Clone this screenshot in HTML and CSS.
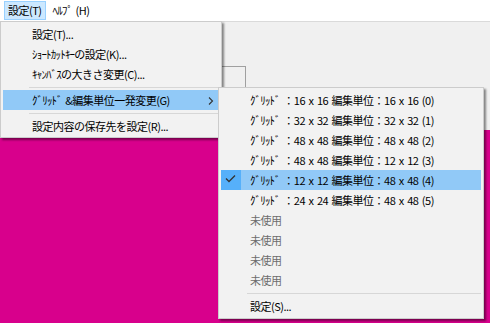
FILE: index.html
```html
<!DOCTYPE html>
<html lang="ja">
<head>
    <meta charset="UTF-8">
    <title>設定メニュー</title>
    <link rel="stylesheet" href="styles.css">
</head>
<body>
    <div class="menubar">
        <span class="bar-item active">設定(T)</span>
        <span class="bar-item"><span class="hw">ﾍﾙﾌﾟ</span> (H)</span>
    </div>
    <div class="workspace">
        <div class="toolbar"><div class="corner"></div></div>
        <div class="canvas"></div>
    </div>

    <div class="menu main-menu">
        <div class="item"><span class="label">設定(T)...</span></div>
        <div class="item"><span class="label"><span class="hw">ｼｮｰﾄｶｯﾄｷｰ</span>の設定(K)...</span></div>
        <div class="item"><span class="label"><span class="hw">ｷｬﾝﾊﾞｽ</span>の大きさ変更(C)...</span></div>
        <div class="sep"></div>
        <div class="item hover">
            <span class="label"><span class="hw">ｸﾞﾘｯﾄﾞ</span> &amp;編集単位一発変更(G)</span>
            <svg class="arrow" width="8" height="10" viewBox="0 0 8 10"><polyline points="2,1.5 5.5,5 2,8.5" fill="none" stroke="#333" stroke-width="1.1"/></svg>
        </div>
        <div class="sep"></div>
        <div class="item"><span class="label">設定内容の保存先を設定(R)...</span></div>
    </div>

    <div class="menu sub-menu">
        <div class="item"><span class="label"><span class="hw">ｸﾞﾘｯﾄﾞ</span> ：16 x 16 編集単位：16 x 16 (0)</span></div>
        <div class="item"><span class="label"><span class="hw">ｸﾞﾘｯﾄﾞ</span> ：32 x 32 編集単位：32 x 32 (1)</span></div>
        <div class="item"><span class="label"><span class="hw">ｸﾞﾘｯﾄﾞ</span> ：48 x 48 編集単位：48 x 48 (2)</span></div>
        <div class="item"><span class="label"><span class="hw">ｸﾞﾘｯﾄﾞ</span> ：48 x 48 編集単位：12 x 12 (3)</span></div>
        <div class="item hover checked">
            <span class="check"><svg width="20" height="20" viewBox="0 0 20 20"><polyline points="5,8.5 8,11.5 14,5.5" fill="none" stroke="#333" stroke-width="1.3"/></svg></span>
            <span class="label"><span class="hw">ｸﾞﾘｯﾄﾞ</span> ：12 x 12 編集単位：48 x 48 (4)</span>
        </div>
        <div class="item"><span class="label"><span class="hw">ｸﾞﾘｯﾄﾞ</span> ：24 x 24 編集単位：48 x 48 (5)</span></div>
        <div class="item disabled"><span class="label">未使用</span></div>
        <div class="item disabled"><span class="label">未使用</span></div>
        <div class="item disabled"><span class="label">未使用</span></div>
        <div class="item disabled"><span class="label">未使用</span></div>
        <div class="sep"></div>
        <div class="item"><span class="label">設定(S)...</span></div>
    </div>
</body>
</html>
```

FILE: styles.css
```css
body {
    font-family: "Noto Sans CJK JP", "Noto Sans", sans-serif;
    font-size: 11px;
    letter-spacing: -0.5px;
    word-spacing: 1.5px;
    color: #000;
    margin: 0;
    width: 490px;
    height: 323px;
    overflow: hidden;
    position: relative;
    background-color: #f0f0f0;
}
.hw {
    letter-spacing: -0.8px;
}
.menubar {
    height: 21px;
    background-color: #fff;
    display: flex;
    align-items: center;
    padding-left: 4px;
    gap: 3px;
}
.bar-item {
    height: 17px;
    line-height: 17px;
    padding: 0 3px;
    border: 1px solid transparent;
}
.bar-item.active {
    background-color: #cce8ff;
    border-color: #99d1ff;
}
.workspace {
    border-top: 1px solid #dadada;
}
.toolbar {
    height: 108px;
    padding-top: 44px;
    box-sizing: border-box;
}
.corner {
    margin-left: 200px;
    width: 46px;
    height: 64px;
    border-top: 1px solid #a0a0a0;
    border-right: 1px solid #a0a0a0;
    box-sizing: border-box;
}
.canvas {
    height: 193px;
    background-color: #d8008c;
}
.menu {
    position: absolute;
    background-color: #f2f2f2;
    border: 1px solid #cccccc;
    padding: 2px 0;
    box-shadow: 2px 2px 2px rgba(0, 0, 0, 0.45);
}
.main-menu {
    left: 0;
    top: 21px;
    width: 220px;
    padding-bottom: 1px;
}
.sub-menu {
    left: 218px;
    top: 87px;
    width: 264px;
}
.item {
    position: relative;
    height: 20px;
    line-height: 20px;
    margin: 0 2px;
    padding-left: 29px;
    white-space: nowrap;
    display: flex;
    align-items: center;
}
.item.hover {
    background-color: #91c9f7;
}
.item.disabled {
    color: #6d6d6d;
}
.check {
    position: absolute;
    left: 0;
    top: 0;
    width: 20px;
    height: 20px;
    background-color: #56b0fa;
}
.check svg {
    display: block;
}
.arrow {
    position: absolute;
    right: 4px;
    top: 6px;
}
.sep {
    height: 1px;
    background-color: #d7d7d7;
    margin: 3px 2px 2px 28px;
}
```
